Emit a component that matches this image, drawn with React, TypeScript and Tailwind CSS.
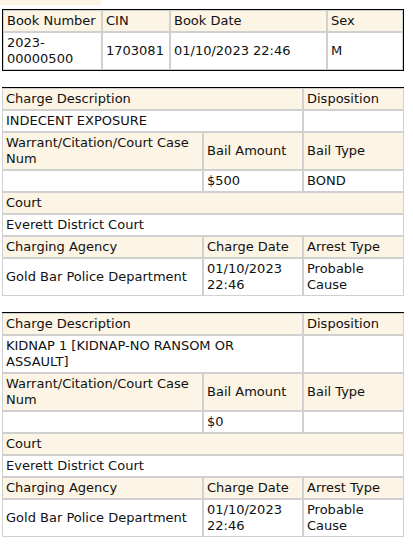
import React from 'react'

const cell = 'border border-[#d0d0d0] px-[3px] py-[2px] leading-[16px] flex items-center'
const head = `${cell} bg-[#fcf4e4]`
const body = `${cell} bg-white`

type Charge = {
  description: string
  disposition: string
  warrant: string
  bailAmount: string
  bailType: string
  court: string
  agency: string
  chargeDate: string
  arrestType: string
}

const charges: Charge[] = [
  {
    description: 'INDECENT EXPOSURE',
    disposition: '',
    warrant: '',
    bailAmount: '$500',
    bailType: 'BOND',
    court: 'Everett District Court',
    agency: 'Gold Bar Police Department',
    chargeDate: '01/10/2023 22:46',
    arrestType: 'Probable Cause',
  },
  {
    description: 'KIDNAP 1 [KIDNAP-NO RANSOM OR ASSAULT]',
    disposition: '',
    warrant: '',
    bailAmount: '$0',
    bailType: '',
    court: 'Everett District Court',
    agency: 'Gold Bar Police Department',
    chargeDate: '01/10/2023 22:46',
    arrestType: 'Probable Cause',
  },
]

function ChargeTable({ c }: { c: Charge }) {
  return (
    <div className="mt-[16px] ml-[2px] w-[402px] border-t border-black grid grid-cols-[201px_100px_101px]">
      {/* 罪名 / 处置 */}
      <div className={`${head} col-span-2`}>Charge Description</div>
      <div className={head}>Disposition</div>
      <div className={`${body} col-span-2`}>{c.description}</div>
      <div className={body}>{c.disposition}</div>

      {/* 保释 */}
      <div className={head}>Warrant/Citation/Court Case Num</div>
      <div className={head}>Bail Amount</div>
      <div className={head}>Bail Type</div>
      <div className={body}>{c.warrant}</div>
      <div className={body}>{c.bailAmount}</div>
      <div className={body}>{c.bailType}</div>

      {/* 法院 */}
      <div className={`${head} col-span-3`}>Court</div>
      <div className={`${body} col-span-3`}>{c.court}</div>

      {/* 机构 */}
      <div className={head}>Charging Agency</div>
      <div className={head}>Charge Date</div>
      <div className={head}>Arrest Type</div>
      <div className={body}>{c.agency}</div>
      <div className={body}>{c.chargeDate}</div>
      <div className={body}>{c.arrestType}</div>
    </div>
  )
}

export default function App() {
  return (
    <div className="w-[413px] h-[545px] overflow-hidden bg-white text-[13px] text-[#111] font-['Verdana','DejaVu_Sans',sans-serif]">
      <div className="h-[5px] w-[101px] bg-[#fcf4e4]" />

      {/* 预订信息 */}
      <div className="mt-[4px] ml-[2px] w-[402px] border border-black grid grid-cols-[99px_68px_157px_76px]">
        <div className={`${head} whitespace-nowrap`}>Book Number</div>
        <div className={head}>CIN</div>
        <div className={head}>Book Date</div>
        <div className={head}>Sex</div>
        <div className={body}>2023-00000500</div>
        <div className={body}>1703081</div>
        <div className={body}>01/10/2023 22:46</div>
        <div className={body}>M</div>
      </div>

      {charges.map((c, i) => (
        <ChargeTable key={i} c={c} />
      ))}
    </div>
  )
}
